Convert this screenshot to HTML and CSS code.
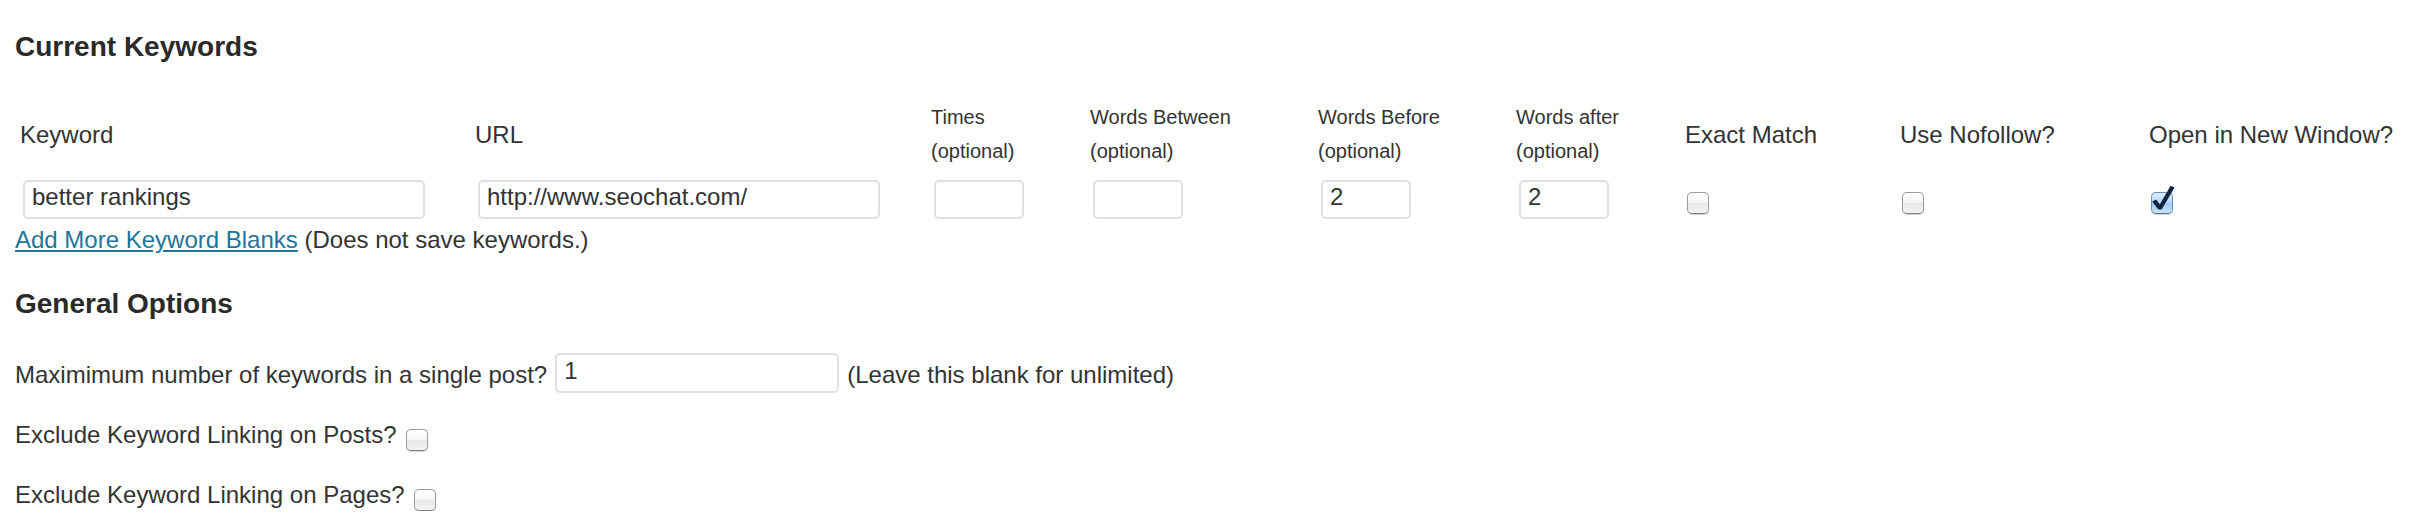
FILE: index.html
```html
<!DOCTYPE html>
<html lang="en">
<head>
<meta charset="utf-8">
<title>Keyword Options</title>
<link rel="stylesheet" href="styles.css">
</head>
<body>
<div class="page">
  <h3 class="section-title">Current Keywords</h3>
  <div class="kw-grid">
    <div class="th">Keyword</div>
    <div class="th">URL</div>
    <div class="th small">Times<br>(optional)</div>
    <div class="th small">Words Between<br>(optional)</div>
    <div class="th small">Words Before<br>(optional)</div>
    <div class="th small">Words after<br>(optional)</div>
    <div class="th">Exact Match</div>
    <div class="th">Use Nofollow?</div>
    <div class="th">Open in New Window?</div>

    <div class="td"><input class="text wide" type="text" value="better rankings"></div>
    <div class="td"><input class="text wide" type="text" value="http://www.seochat.com/"></div>
    <div class="td"><input class="text num" type="text" value=""></div>
    <div class="td"><input class="text num" type="text" value=""></div>
    <div class="td"><input class="text num" type="text" value="2"></div>
    <div class="td"><input class="text num" type="text" value="2"></div>
    <div class="td"><span class="cb"></span></div>
    <div class="td"><span class="cb"></span></div>
    <div class="td"><span class="cb checked"><svg class="tick" viewBox="0 -8 27 30" width="27" height="30"><path d="M2.2 9.6 L6.2 7.4 L9.8 12.6 L20.6 -6.2 L24.6 -4.6 L11.6 17.6 L8.4 17.6 Z" fill="#0e2440"/></svg></span></div>
  </div>
  <p class="add-more"><a href="#">Add More Keyword Blanks</a> (Does not save keywords.)</p>

  <h3 class="section-title second">General Options</h3>
  <div class="opt-row">
    <span>Maximimum number of keywords in a single post?</span>
    <input class="text max" type="text" value="1">
    <span>(Leave this blank for unlimited)</span>
  </div>
  <p class="opt-check first">Exclude Keyword Linking on Posts?<span class="cb inline"></span></p>
  <p class="opt-check">Exclude Keyword Linking on Pages?<span class="cb inline"></span></p>
</div>
</body>
</html>
```

FILE: styles.css
```css
* { box-sizing: border-box; }

html, body {
  margin: 0;
  padding: 0;
  background: #ffffff;
}

body {
  font-family: "Liberation Sans", Arial, Helvetica, sans-serif;
  font-size: 24px;
  line-height: 27px;
  color: #333333;
}

.page {
  padding-left: 15px;
}

.section-title {
  margin: 31px 0 0;
  font-size: 28px;
  line-height: 32px;
  font-weight: bold;
  color: #2a2a2a;
}

.section-title.second {
  margin-top: 35px;
}

.kw-grid {
  display: grid;
  grid-template-columns: 455px 456px 159px 228px 198px 169px 215px 249px 1fr;
  grid-template-rows: 68px 39px;
  row-gap: 12px;
  margin: 37px 0 0 5px;
}

.th {
  align-self: center;
  font-weight: normal;
  white-space: nowrap;
}

.th.small {
  font-size: 20px;
  line-height: 34px;
}

.td {
  display: flex;
  align-items: flex-start;
}

.text {
  height: 39px;
  margin: 0 0 0 3px;
  padding: 0 7px 5px;
  border: 2px solid #e0e0e0;
  border-radius: 5px;
  background: #ffffff;
  font-family: inherit;
  font-size: 24px;
  color: #333333;
  outline: none;
}

.text.wide { width: 402px; }
.text.num { width: 90px; }
.text.max { width: 284px; height: 40px; margin: 0; }

.cb {
  position: relative;
  display: inline-block;
  width: 22px;
  height: 22px;
  margin: 12px 0 0 2px;
  border: 1px solid #9b9b9b;
  border-bottom-color: #7f7f7f;
  border-radius: 5px;
  background: linear-gradient(#ffffff 0%, #f6f6f6 48%, #e8e8e8 52%, #f3f3f3 100%);
  box-shadow: 0 1px 1px rgba(0, 0, 0, 0.18);
}

.cb.checked {
  border-color: #6b8db5;
  border-bottom-color: #4f6f96;
  background: linear-gradient(#dcecfb 0%, #b7d8f6 48%, #9dc9f1 52%, #cbe4fa 100%);
}

.tick {
  position: absolute;
  left: -2px;
  top: -9px;
}

.cb.inline {
  margin: 0 0 0 9px;
  vertical-align: -8px;
}

.add-more {
  margin: 7px 0 0;
}

.add-more a {
  color: #21759b;
  text-decoration: underline;
}

.opt-row {
  display: flex;
  align-items: center;
  gap: 8px;
  height: 40px;
  margin-top: 33px;
}

.opt-row span {
  position: relative;
  top: 1px;
}

.opt-check {
  margin: 30px 0 0;
}

.opt-check.first {
  margin-top: 28px;
}
```
